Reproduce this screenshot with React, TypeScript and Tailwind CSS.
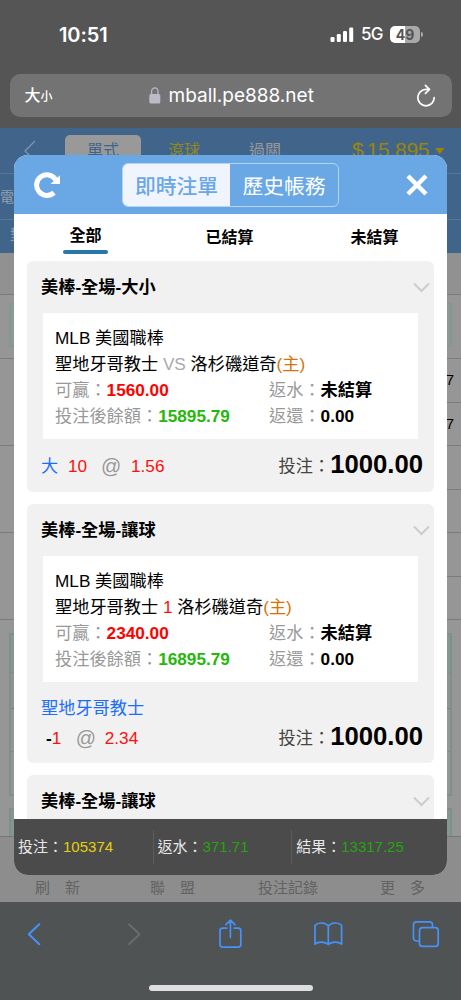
import { ReactNode } from "react";
import clsx from "clsx";

interface Bet {
  title: string;
  versus: ReactNode;
  win: string;
  balance: string;
  team?: string;
  pick: ReactNode;
}

const bets: Bet[] = [
  {
    title: "美棒-全場-大小",
    versus: <span className="text-[#aaa]">VS</span>,
    win: "1560.00",
    balance: "15895.79",
    pick: (
      <>
        <span className="w-[27px] text-[#1a6dff]">大</span>
        <span className="w-[33px] text-[#ff0e0e]">10</span>
        <span className="w-[30px] text-[20px] text-[#999]">@</span>
        <span className="text-[#ff0e0e]">1.56</span>
      </>
    ),
  },
  {
    title: "美棒-全場-讓球",
    versus: <span className="text-[#ff0e0e]">1</span>,
    win: "2340.00",
    balance: "16895.79",
    team: "聖地牙哥教士",
    pick: (
      <>
        <span className="ml-[5px] font-bold">-</span>
        <span className="w-[24px] text-[#ff0e0e]">1</span>
        <span className="w-[29px] text-[20px] text-[#999]">@</span>
        <span className="text-[#ff0e0e]">2.34</span>
      </>
    ),
  },
];

const totals = [
  { label: "投注：", value: "105374", color: "text-[#e6cf0a]" },
  { label: "返水：", value: "371.71", color: "text-[#25a50d]" },
  { label: "結果：", value: "13317.25", color: "text-[#25a50d]" },
];

function StatusBar() {
  return (
    <div className="flex h-[74px] items-start justify-between pt-[22px] pr-[38px] pl-[59px] font-['Inter','Liberation_Sans',sans-serif] text-white">
      <span className="text-[20px] leading-[26px] font-semibold tracking-[-0.1px]">10:51</span>
      <div className="flex h-[25px] items-center">
        <svg width="24" height="16" viewBox="0 0 24 16" fill="white">
          <rect x="0.5" y="10" width="4" height="5" rx="1.2" />
          <rect x="6.8" y="7" width="4" height="8" rx="1.2" />
          <rect x="13" y="4" width="4" height="11" rx="1.2" />
          <rect x="19.2" y="0.5" width="4" height="14.5" rx="1.2" />
        </svg>
        <span className="mt-px ml-[7px] w-[22px] text-[17px] font-medium tracking-[-0.8px]">5G</span>
        <div className="ml-[7px] flex h-[17px] w-[30px] items-center justify-center rounded-[5px] bg-linear-to-r from-white from-50% to-[#a9a9a9] to-50% text-[14px] leading-[17px] font-bold text-[#555]">
          49
        </div>
        <div className="ml-px h-[5px] w-[2px] rounded-r bg-[#a9a9a9]" />
      </div>
    </div>
  );
}

function AddressBar() {
  return (
    <div className="mx-[9.5px] flex h-[43px] items-center rounded-[10px] bg-[#737373] text-white">
      <div className="ml-[15px] flex w-[124px] items-baseline pt-[2px] leading-[24px]">
        <span className="text-[16px] font-medium">大</span>
        <span className="text-[12px] font-medium">小</span>
      </div>
      <svg width="12" height="17" viewBox="0 0 12 17" fill="none">
        <rect x="0.3" y="7" width="11" height="9.5" rx="1.5" fill="#bcbac5" />
        <path d="M2.6 7.5V4.6a3.2 3.7 0 0 1 6.4 0v2.9" stroke="#bcbac5" strokeWidth="1.3" />
      </svg>
      <span className="mt-[2px] ml-[8px] w-[147px] font-['Inter','Liberation_Sans',sans-serif] text-[19px] whitespace-nowrap">
        mball.pe888.net
      </span>
      <svg className="ml-[100px]" width="20" height="24" viewBox="0 0 20 24" fill="none" stroke="white" strokeWidth="1.7" strokeLinecap="round" strokeLinejoin="round">
        <path d="M13.1 5.4H10A8.2 8.2 0 1 0 18.2 13.6" />
        <path d="M9.4 1.4l4 4-4 4" />
      </svg>
    </div>
  );
}

// dimmed betting page behind the dialog
function BackgroundPage() {
  return (
    <div className="flex h-full flex-col overflow-hidden bg-[#969696]">
      <div className="h-[125px] shrink-0 bg-[#41658a]">
        <div className="flex h-[46px] items-start border-b border-[#587797]">
          <svg className="mt-[12px] ml-[23px]" width="13" height="22" fill="none" stroke="#8298af" strokeWidth="1.2">
            <path d="M12 1L2 11l10 10" />
          </svg>
          <div className="mt-[7px] ml-[29px] h-[38px] w-[76px] rounded-[5px] bg-[#999] text-center text-[16px] leading-[31px] text-[#41658a]">單式</div>
          <span className="mt-[7px] ml-[27px] text-[16px] leading-[31px] text-[#948716]">滾球</span>
          <span className="mt-[7px] ml-[49px] text-[16px] leading-[31px] text-[#999]">過關</span>
          <div className="mt-[6px] ml-[71px] flex w-[81px] gap-[3px] text-[21px] leading-[31px] text-[#9a850b]">
            <span>$</span>
            <span className="tracking-[-0.3px]">15,895</span>
          </div>
          <svg className="mt-[20px] ml-[2px]" width="10" height="7" fill="#9a850b">
            <path d="M0 0h9.500L4.750 6z" />
          </svg>
        </div>
        <div className="h-[46px] border-b border-[#587797] pt-[11px] text-[14px] leading-[24px] text-[#8d9fb1]">
          <span>電</span>
        </div>
        <div className="pt-[4px] pl-[10px] text-[15px] leading-[22px] text-[#8d9fb1]">對</div>
      </div>
      <div className="h-[42px] shrink-0 border-b border-[#7b7b7b] bg-[#919191]" />
      <div className="h-[64px] shrink-0 border-b border-[#7b7b7b] px-[9px] pt-[8px]">
        <div className="h-[44px] border-2 border-[#829991] bg-[#8f9894]" />
      </div>
      {["7", "7", "", "", "", ""].map((num, i) => (
        <div
          key={i}
          className={clsx("flex shrink-0 items-center", i % 2 ? "h-[43px]" : "h-[44px]")}
        >
          <div className={clsx("h-full w-[230px]", i % 2 === 1 && "border-b border-[#7b7b7b]")} />
          <div className="flex h-full w-[231px] items-center justify-end border-b border-[#7b7b7b] pr-[7px] font-['Liberation_Sans',sans-serif] text-[15px]">
            {num}
          </div>
        </div>
      ))}
      <div className="mx-[9px] mt-[13px] h-[163px] shrink-0 border-2 border-[#79928a]">
        <div className="h-[38px] border-b border-[#79928a] bg-[#879690]" />
        <div className="h-[36px] border-b border-[#7b7b7b] bg-[#929292]" />
        <div className="h-[43px] border-b border-[#79928a]" />
      </div>
      <div className="mx-[9px] mt-[12px] h-[28px] shrink-0 border-2 border-b-0 border-[#79928a] bg-[#879690]" />
      <div className="flex h-[67px] shrink-0 border-t border-[#777] bg-[#8d8d8d] pt-[40px] text-[15px] leading-[22px] text-[#626262]">
        <span className="ml-[35px] w-[115px] whitespace-pre">刷　新</span>
        <span className="w-[108px] whitespace-pre">聯　盟</span>
        <span className="w-[122px]">投注記錄</span>
        <span className="whitespace-pre">更　多</span>
      </div>
    </div>
  );
}

function CardTitle({ children }: { children: ReactNode }) {
  return (
    <div className="flex h-[52px] items-center justify-between pr-[4px] pl-[14px]">
      <span className="text-[17.2px] leading-[26px] font-bold">{children}</span>
      <svg width="17" height="11" viewBox="0 0 17 11" fill="none" stroke="#ccc" strokeWidth="2">
        <path d="M1 1.500l7.500 7.500L16 1.500" />
      </svg>
    </div>
  );
}

function BetCard({ bet }: { bet: Bet }) {
  return (
    <div className={clsx("rounded-[6px] bg-[#f1f1f1]", bet.team ? "h-[259px]" : "h-[231px]")}>
      <CardTitle>{bet.title}</CardTitle>
      <div className="mr-[16px] ml-[16px] h-[126px] bg-white pt-[12px] pl-[12px] text-[17.2px] leading-[26px] whitespace-nowrap">
        <div>MLB 美國職棒</div>
        <div>
          聖地牙哥教士 {bet.versus} 洛杉磯道奇<span className="text-[#d47307]">(主)</span>
        </div>
        <div className="flex">
          <div className="w-[214px]">
            <span className="text-[#999]">可贏：</span>
            <b className="text-[#ff0000]">{bet.win}</b>
          </div>
          <span className="text-[#999]">返水：</span>
          <b>未結算</b>
        </div>
        <div className="flex">
          <div className="w-[214px]">
            <span className="text-[#999]">投注後餘額：</span>
            <b className="text-[#25b80a]">{bet.balance}</b>
          </div>
          <span className="text-[#999]">返還：</span>
          <b>0.00</b>
        </div>
      </div>
      {bet.team && (
        <div className="mt-[13px] -mb-[10px] pl-[14px] text-[17.2px] leading-[26px] text-[#1a6dff]">{bet.team}</div>
      )}
      <div className="flex h-[53px] items-center justify-between pr-[11px] pl-[14px] text-[17.2px] leading-[26px]">
        <div className="flex items-center">{bet.pick}</div>
        <div className="flex items-center">
          <span className="text-[#444]">投注：</span>
          <b className="pb-[3px] text-[25.7px]">1000.00</b>
        </div>
      </div>
    </div>
  );
}

function BetsDialog() {
  return (
    <div className="absolute top-[27px] left-[14px] flex h-[720px] w-[433px] flex-col overflow-hidden rounded-[14px] bg-white text-black">
      <div className="flex h-[59px] shrink-0 items-center bg-[#6aa7e5]">
        <svg className="ml-[20px]" width="28" height="28" viewBox="0 0 28 28" fill="none">
          <path d="M20 21.600A10.300 10.300 0 1 1 21.600 8.600" stroke="white" strokeWidth="5" />
          <path d="M26 4.300v8.700H16.500z" fill="white" />
        </svg>
        <div className="ml-[60px] flex h-[44px] w-[217px] overflow-hidden rounded-[6px] border border-[#b5d3f2] text-center text-[20.8px] leading-[45px]">
          <div className="w-[107px] bg-[#f0f5fd] font-medium text-[#6aa7e5]">即時注單</div>
          <div className="flex-1 text-white">歷史帳務</div>
        </div>
        <svg className="ml-[67px]" width="22" height="22" viewBox="0 0 22 22" stroke="white" strokeWidth="4.500">
          <path d="M2 2l18 18M20 2L2 20" />
        </svg>
      </div>
      <div className="flex h-[47px] shrink-0 text-center text-[16px] leading-[24px] font-medium">
        <div className="ml-[49px] flex w-[45px] flex-col pt-[10px]">
          <b>全部</b>
          <div className="mt-[2px] h-[4px] rounded-[2px] bg-[#2877a8]" />
        </div>
        <b className="mt-[12px] ml-[97px] w-[49px]">已結算</b>
        <b className="mt-[12px] ml-[96px] w-[49px]">未結算</b>
      </div>
      <div className="mx-[13px] flex min-h-0 flex-1 flex-col gap-[12px] overflow-hidden">
        {bets.map((bet) => (
          <div key={bet.win} className="shrink-0">
            <BetCard bet={bet} />
          </div>
        ))}
        <div className="h-[80px] shrink-0 rounded-t-[6px] bg-[#f1f1f1]">
          <CardTitle>美棒-全場-讓球</CardTitle>
        </div>
      </div>
      <div className="flex h-[56px] shrink-0 items-center bg-[#4b4b4b] text-[15px] leading-[24px]">
        {totals.map((t, i) => (
          <div key={t.label} className={clsx("flex h-[34px] w-[138.6px] items-center pl-[4px]", i > 0 && "border-l border-[#5c5c5c] pl-[3px]")}>
            <span className="text-[#e8e8e8]">{t.label}</span>
            <span className={t.color}>{t.value}</span>
          </div>
        ))}
      </div>
    </div>
  );
}

function Toolbar() {
  return (
    <div className="flex h-[98px] flex-col items-center bg-[#505353]">
      <svg width="461" height="64" viewBox="0 902 461 64" fill="none" stroke="#4692fa" strokeWidth="1.700" strokeLinecap="round" strokeLinejoin="round">
        <path d="M39.300 924.300L28.800 934.300L39.300 944.300" strokeWidth="2" />
        <path d="M129 924.300L139.500 934.300L129 944.300" stroke="#6b6d6d" strokeWidth="1.900" />
        <path d="M226.700 928.200H222.500a2.500 2.500 0 0 0-2.500 2.500V944.600a2.500 2.500 0 0 0 2.500 2.500H238.300a2.500 2.500 0 0 0 2.500-2.500V930.700a2.500 2.500 0 0 0-2.500-2.500H234.200M230.400 937.300V920.500M225.900 924.700L230.400 920.200L234.900 924.700" />
        <path d="M328.300 926C325.500 922.500 318.500 921.800 315 925.300V944.200C318.500 941 325.500 941.700 328.300 944.500C331.100 941.700 338.100 941 341.600 944.200V925.300C338.100 921.800 331.100 922.500 328.300 926V944.500" />
        <path d="M418.500 941H416.500a3 3 0 0 1-3-3V924.800a3 3 0 0 1 3-3H429.500a3 3 0 0 1 3 3V926.500" />
        <rect x="419.500" y="927.700" width="18.700" height="18.700" rx="3" />
      </svg>
      <div className="mt-[19px] h-[6px] w-[164px] rounded-full bg-[#dedede]" />
    </div>
  );
}

export default function App() {
  return (
    <div className="flex h-[1000px] w-[461px] flex-col overflow-hidden bg-[#555] font-['Liberation_Sans','Noto_Sans_CJK_TC',sans-serif]">
      <div className="h-[128px] shrink-0">
        <StatusBar />
        <AddressBar />
      </div>
      <div className="relative h-[774px] shrink-0">
        <BackgroundPage />
        <BetsDialog />
      </div>
      <Toolbar />
    </div>
  );
}
